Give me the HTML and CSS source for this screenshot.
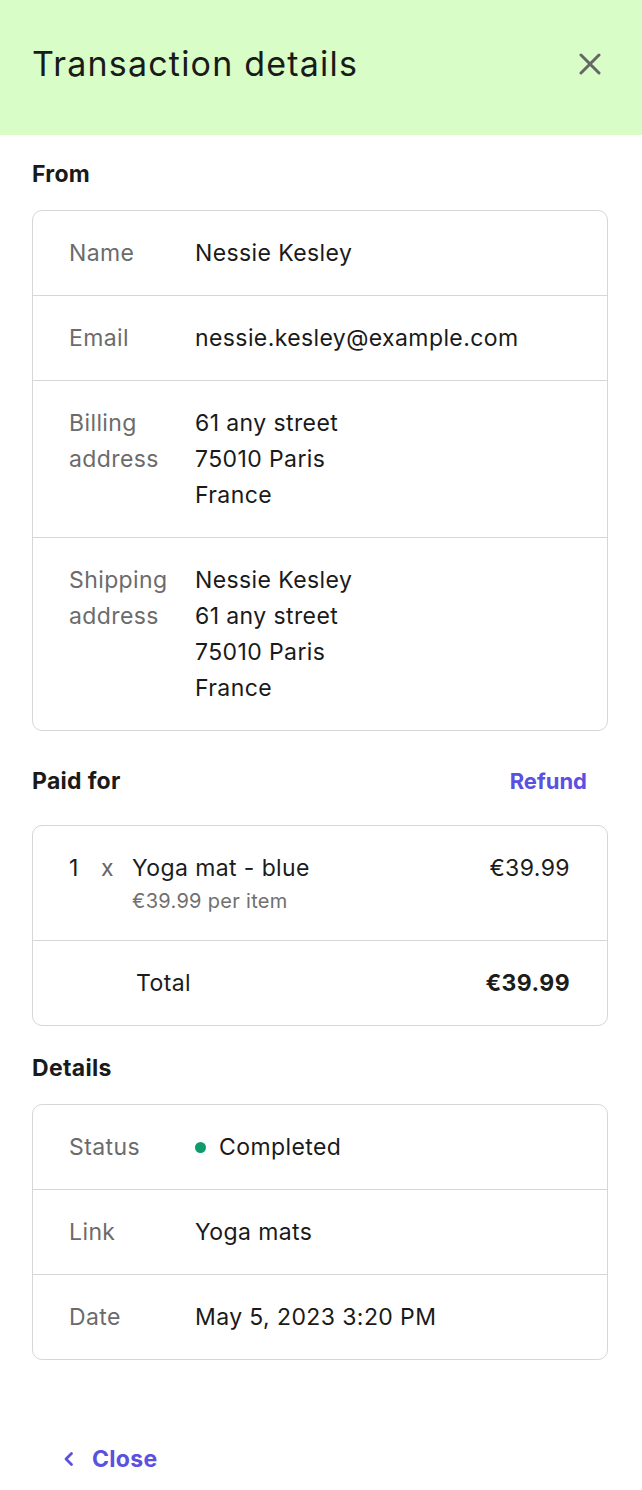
FILE: index.html
```html
<!DOCTYPE html>
<html lang="en">
<head>
<meta charset="utf-8">
<title>Transaction details</title>
<link rel="stylesheet" href="styles.css">
</head>
<body>
<header class="header">
  <h1 class="title">Transaction details</h1>
  <button class="icon-btn" aria-label="Close">
    <svg width="22" height="22" viewBox="0 0 22 22" fill="none" stroke="#666" stroke-width="3" stroke-linecap="round"><path d="M2 2L20 20M20 2L2 20"/></svg>
  </button>
</header>
<main class="content">
  <section class="section">
    <div class="section-head"><h2 class="section-title">From</h2></div>
    <div class="card">
      <div class="row"><div class="label">Name</div><div class="value">Nessie Kesley</div></div>
      <div class="row"><div class="label">Email</div><div class="value">nessie.kesley@example.com</div></div>
      <div class="row"><div class="label">Billing<br>address</div><div class="value">61 any street<br>75010 Paris<br>France</div></div>
      <div class="row"><div class="label">Shipping<br>address</div><div class="value">Nessie Kesley<br>61 any street<br>75010 Paris<br>France</div></div>
    </div>
  </section>
  <section class="section">
    <div class="section-head"><h2 class="section-title">Paid for</h2><a class="link" href="#">Refund</a></div>
    <div class="card">
      <div class="item-row">
        <span class="qty">1</span><span class="times">x</span>
        <div class="item-info"><div class="item-name">Yoga mat - blue</div><div class="item-sub">€39.99 per item</div></div>
        <span class="price">€39.99</span>
      </div>
      <div class="total-row"><span class="total-label">Total</span><span class="total-price">€39.99</span></div>
    </div>
  </section>
  <section class="section">
    <div class="section-head"><h2 class="section-title">Details</h2></div>
    <div class="card">
      <div class="row"><div class="label">Status</div><div class="value status"><span class="dot"></span>Completed</div></div>
      <div class="row"><div class="label">Link</div><div class="value">Yoga mats</div></div>
      <div class="row"><div class="label">Date</div><div class="value">May 5, 2023 3:20 PM</div></div>
    </div>
  </section>
  <div class="footer">
    <a class="back" href="#">
      <svg width="12" height="16" viewBox="0 0 12 16" fill="none" stroke="#5b50e0" stroke-width="2.8" stroke-linecap="round" stroke-linejoin="round"><path d="M8.5 2.5L3 8L8.5 13.5"/></svg>
      <span>Close</span>
    </a>
  </div>
</main>
</body>
</html>
```

FILE: styles.css
```css
* { box-sizing: border-box; }
body {
  margin: 0;
  font-family: Inter, "Noto Sans", sans-serif;
  color: #1c1c1c;
  background: #fff;
}
.header {
  height: 135px;
  background: #d8fdc6;
  display: flex;
  align-items: center;
  justify-content: space-between;
  padding: 0 41px 8px 32px;
}
.title {
  margin: 0;
  font-size: 34px;
  font-weight: 400;
  letter-spacing: 1.2px;
  color: #1a1a1a;
}
.icon-btn {
  border: 0;
  background: none;
  padding: 0;
  width: 22px;
  height: 22px;
  display: flex;
}
.content {
  padding: 25px 34px 0 32px;
}
.section + .section { margin-top: 28px; }
.section-head {
  display: flex;
  justify-content: space-between;
  align-items: center;
  min-height: 28px;
  margin-bottom: 22px;
}
.section-title {
  margin: 0;
  font-size: 23px;
  line-height: 28px;
  font-weight: 700;
  letter-spacing: 0.3px;
  color: #1a1a1a;
}
.link {
  color: #5b50e0;
  font-weight: 700;
  font-size: 22px;
  line-height: 28px;
  padding: 8px 0;
  text-decoration: none;
  margin-right: 21px;
}
.card {
  border: 1px solid #d6d6d6;
  border-radius: 10px;
}
.row {
  display: flex;
  padding: 24px 36px;
  font-size: 23px;
  line-height: 36px;
  letter-spacing: 0.4px;
  border-top: 1px solid #d6d6d6;
}
.row:first-child { border-top: 0; }
.label {
  width: 126px;
  flex: none;
  color: #6b6b6b;
}
.value { color: #1a1a1a; }
.status { display: flex; align-items: center; }
.dot {
  width: 11px;
  height: 11px;
  border-radius: 50%;
  background: #109a6c;
  margin-right: 13px;
}
.item-row {
  display: flex;
  align-items: flex-start;
  padding: 24px 37px 24px 36px;
  font-size: 23px;
  line-height: 36px;
  letter-spacing: 0.4px;
}
.qty { width: 32px; flex: none; }
.times { width: 31px; flex: none; color: #666; }
.item-info { flex: 1; }
.item-sub {
  font-size: 20px;
  line-height: 30px;
  letter-spacing: 0.3px;
  color: #707070;
}
.total-row {
  display: flex;
  justify-content: space-between;
  padding: 24px 37px 24px 103px;
  font-size: 23px;
  line-height: 36px;
  letter-spacing: 0.4px;
  border-top: 1px solid #d6d6d6;
}
.total-price { font-weight: 700; }
.footer {
  padding: 81px 0 20px 31px;
}
.back {
  display: inline-flex;
  align-items: center;
  gap: 17px;
  color: #5b50e0;
  text-decoration: none;
  font-weight: 700;
  font-size: 23px;
  line-height: 36px;
  letter-spacing: 0.3px;
}
```
